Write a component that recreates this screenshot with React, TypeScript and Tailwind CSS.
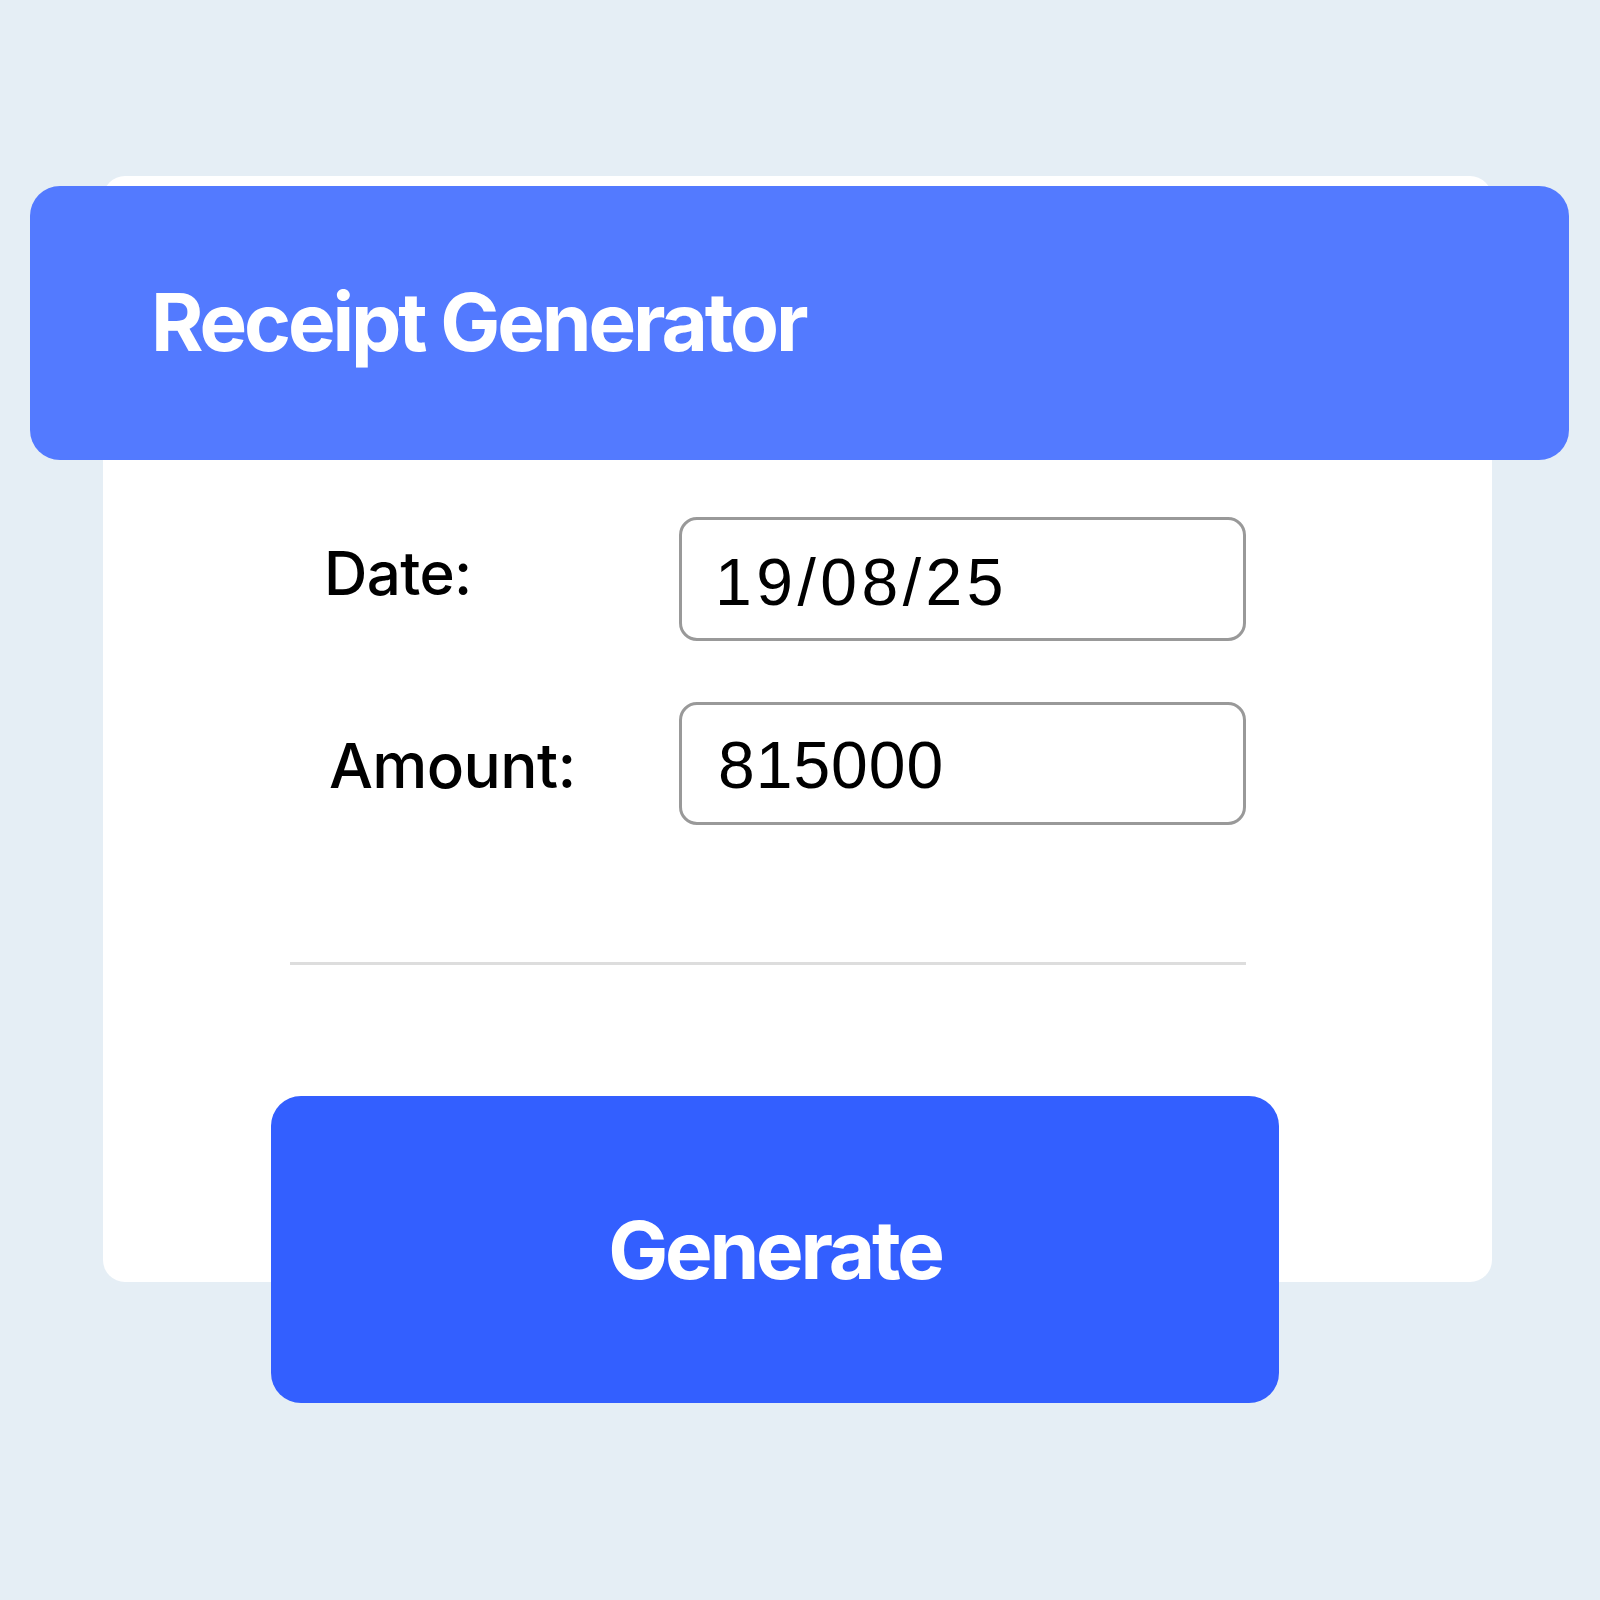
import { useState } from "react";

export default function App() {
  const [date, setDate] = useState("19/08/25");
  const [amount, setAmount] = useState("815000");

  return (
    <div className="min-h-[1600px] w-full bg-[#e5eef5] pt-[176px] font-['Inter',sans-serif]">
      <div className="ml-[103px] h-[1106px] w-[1389px] rounded-[22px] bg-white pt-[10px]">
        <header className="-ml-[73px] flex h-[274px] w-[1539px] items-center rounded-[30px] bg-[#537aff] pl-[121px]">
          <h1 className="pb-[2px] text-[80px] leading-none font-bold tracking-[-0.039em] text-white">
            Receipt Generator
          </h1>
        </header>

        <form className="mt-[57px] ml-[221px] flex flex-col gap-[61px]" onSubmit={(e) => e.preventDefault()}>
          <div className="grid grid-cols-[355px_567px] items-center">
            <label htmlFor="date" className="pb-[12px] text-[60px] leading-none font-medium tracking-[-0.01em] text-black">
              Date:
            </label>
            <input
              id="date"
              value={date}
              onChange={(e) => setDate(e.target.value)}
              className="h-[124px] w-[567px] rounded-[18px] border-[3px] border-[#999999] bg-white pt-[6px] pl-[33px] font-['Liberation_Sans',Arial,sans-serif] text-[66px] tracking-[4.5px] text-black outline-none"
            />
          </div>
          <div className="grid grid-cols-[355px_567px] items-center">
            <label htmlFor="amount" className="pt-[4px] pl-[5px] text-[62px] leading-none font-medium tracking-[-0.01em] text-black">
              Amount:
            </label>
            <input
              id="amount"
              value={amount}
              onChange={(e) => setAmount(e.target.value)}
              className="h-[123px] w-[567px] rounded-[18px] border-[3px] border-[#999999] bg-white pt-[3px] pl-[36px] font-['Liberation_Sans',Arial,sans-serif] text-[66px] tracking-[1px] text-black outline-none"
            />
          </div>
        </form>

        <div className="mt-[137px] ml-[187px] h-[3px] w-[956px] bg-[#dddddd]" />

        <button
          type="button"
          className="mt-[131px] ml-[168px] flex h-[307px] w-[1008px] items-center justify-center rounded-[30px] bg-[#335fff] text-[80px] leading-none font-bold tracking-[-0.04em] text-white"
        >
          Generate
        </button>
      </div>
    </div>
  );
}
